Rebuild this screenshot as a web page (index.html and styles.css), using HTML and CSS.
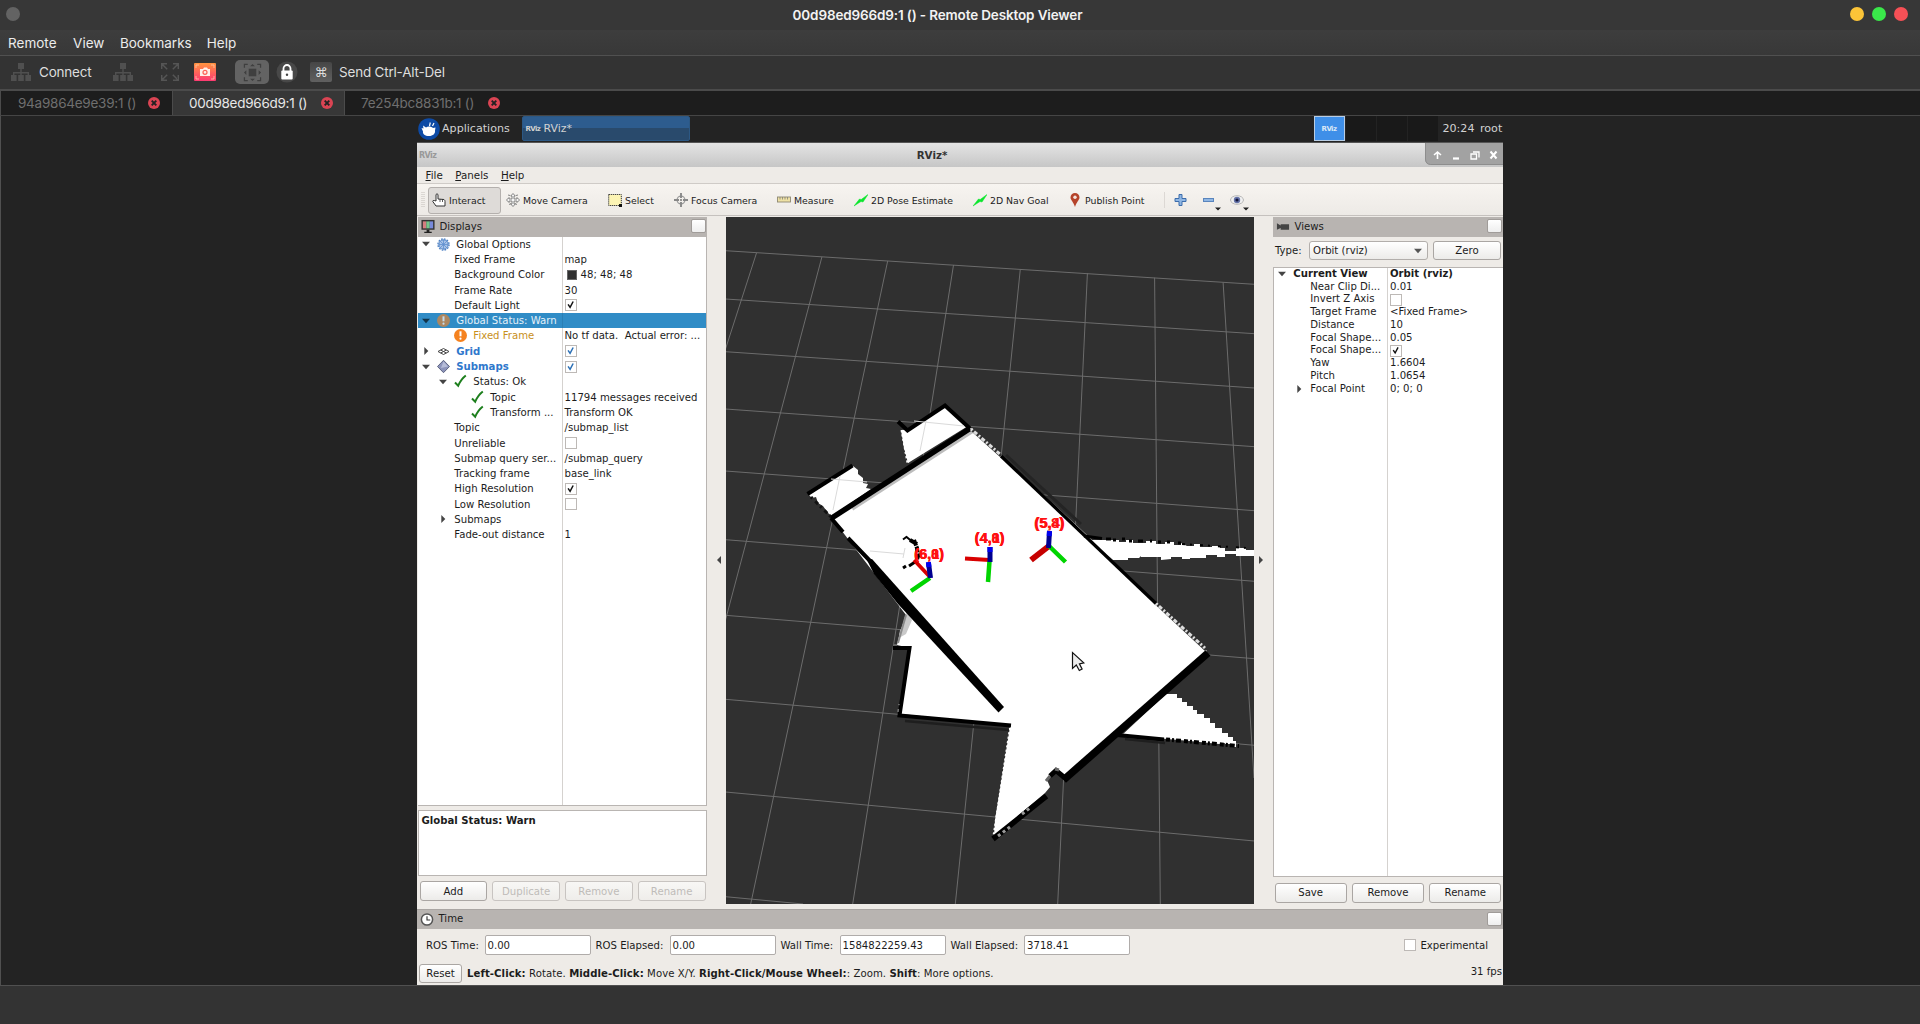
FILE: index.html
```html
<!DOCTYPE html>
<html lang="en">
<head>
<meta charset="utf-8">
<title>Remote Desktop Viewer</title>
<link rel="stylesheet" href="styles.css">
</head>
<body>
<svg class="defs" aria-hidden="true">
  <symbol id="net" viewBox="0 0 20 20"><path d="M7 1h6v6h-6zM0 13h5.6v6H0zM7.2 13h5.6v6H7.2zM14.400 13H20v6h-5.600zM9.300 7h1.400v6H9.300zM2 10h16v1.400H2zM2 10h1.400v3H2zM16.600 10H18v3h-1.400z" fill="#505050"/></symbol>
  <symbol id="tabx" viewBox="0 0 12 12"><circle cx="6" cy="6" r="6" fill="#da4453"/><path d="M3.700 3.700l4.600 4.600M8.300 3.700L3.700 8.300" stroke="#222" stroke-width="1.900"/></symbol>
  <symbol id="down" viewBox="0 0 12 12"><path d="M2 3.800h8L6 8.200z" fill="currentColor"/></symbol>
  <symbol id="right" viewBox="0 0 12 12"><path d="M4.300 2v8L8.300 6z" fill="currentColor"/></symbol>
  <symbol id="tick" viewBox="0 0 12 12"><path d="M2.500 5.300l2.400 3.500L8.600 1.800" fill="none" stroke="currentColor" stroke-width="1.800"/></symbol>
  <symbol id="ok" viewBox="0 0 15 15"><path d="M2 8.500l3.200 3.200C7 7.500 9.500 4 12.800 1.500" fill="none" stroke="#1d7f1d" stroke-width="2"/></symbol>
  <symbol id="warn" viewBox="0 0 15 15"><circle cx="7.500" cy="7.500" r="6.500" fill="#f5821f"/><path d="M7.500 3.300v5" stroke="#fff" stroke-width="2"/><circle cx="7.500" cy="10.700" r="1.100" fill="#fff"/></symbol>
  <symbol id="arrow" viewBox="0 0 14 14"><path d="M0 13L5.500 6l1.700.5L14 1.500 9 9 7 8.500z" fill="#0be62c" stroke="#0be62c" stroke-width=".5"/></symbol>
</svg>

<header class="titlebar">
  <span class="dot grey"></span>
  <span class="title">00d98ed966d9:1 () - Remote Desktop Viewer</span>
  <span class="lights"><span class="dot amber"></span><span class="dot green"></span><span class="dot red"></span></span>
</header>
<nav class="menubar"><span>Remote</span><span>View</span><span>Bookmarks</span><span>Help</span></nav>
<div class="hosttools">
  <svg class="net"><use href="#net"/></svg><span class="connect">Connect</span>
  <svg class="net two"><use href="#net"/></svg>
  <svg class="full" viewBox="0 0 18 18"><path d="M.7 6V.7H6M.7.7l5.500 5.500M12 .7h5.300V6M17.300.7l-5.500 5.500M.7 12v5.300H6M.7 17.300l5.500-5.500M12 17.300h5.300V12M17.300 17.300l-5.500-5.500" fill="none" stroke="#555" stroke-width="1.500"/></svg>
  <svg class="shot" viewBox="0 0 22 18"><defs><linearGradient id="sg" x2="0" y2="1"><stop offset="0" stop-color="#ff9440"/><stop offset="1" stop-color="#fd3a72"/></linearGradient></defs><rect width="22" height="18" rx="1" fill="url(#sg)"/><path d="M2 5V2h3M17 2h3v3M2 13v3h3M17 16h3v-3" fill="none" stroke="#ffc9a8" stroke-width=".8"/><path d="M6 6h3l1-1.500h3L14 6h2v7H6z" fill="#fff0e8"/><circle cx="11" cy="9.300" r="2" fill="none" stroke="#fd6355" stroke-width="1.200"/></svg>
  <span class="toggle"><svg viewBox="0 0 20 20"><rect x="6" y="6" width="8" height="8" fill="#3f3f3f"/><path d="M1.500 5V1.500H5M15 1.500h3.500V5M1.500 15v3.500H5M15 18.500h3.500V15" fill="none" stroke="#3f3f3f" stroke-width="1.300"/><path d="M7.500 3.500L10 1l2.500 2.500zM7.500 16.500L10 19l2.500-2.500zM3.500 7.500L1 10l2.500 2.500zM16.500 7.500L19 10l-2.500 2.500z" fill="#3f3f3f"/></svg></span>
  <svg class="lock" viewBox="0 0 22 22"><circle cx="11" cy="11" r="10.500" fill="#484848"/><path d="M7.500 10V7.500a3.500 3.500 0 0 1 7 0V10" fill="none" stroke="#fff" stroke-width="1.800"/><rect x="5.300" y="9.500" width="11.400" height="9" rx="1" fill="#fff"/><circle cx="11" cy="13.800" r="1.200" fill="#444"/></svg>
  <span class="cmd">⌘</span><span>Send Ctrl-Alt-Del</span>
</div>
<div class="tabs">
  <div class="tab"><span>94a9864e9e39:1 ()</span><svg><use href="#tabx"/></svg></div>
  <div class="tab on"><span>00d98ed966d9:1 ()</span><svg><use href="#tabx"/></svg></div>
  <div class="tab"><span>7e254bc8831b:1 ()</span><svg><use href="#tabx"/></svg></div>
</div>

<main class="stage">
<section class="desktop">
  <div class="xfce">
    <svg class="mouse" viewBox="0 0 22 22"><circle cx="11" cy="11" r="10.800" fill="#0d4aa5"/><path d="M3.500 10l2 .5L5 7.500l3 2c2-1.500 5-1 7 .5l2.500-.5-.5 3c.5 3-2 5.500-6 5.500S4.500 16 5 13.500z" fill="#fff"/><path d="M11.500 8l.8-3.500M14.500 8l1.500-3" stroke="#fff" stroke-width="1.200"/></svg>
    <span class="apps">Applications</span>
    <span class="task"><i>RViz</i>RViz*</span>
    <span class="pager"><b><i>RViz</i></b><b></b><b></b><b></b></span>
    <span class="clock">20:24 root</span>
  </div>
  <div class="wintitle"><i>RViz</i><strong>RViz*</strong>
    <svg viewBox="0 0 78 22"><path d="M0 0h78v22H5q-5-1-5-6z" fill="#a2a2a2"/><path d="M.5 0v16q0 5 5 5.500H78" fill="none" stroke="#8d8d8d"/><g fill="none" stroke="#fff" stroke-width="1.600"><path d="M12.500 16v-6M9 12l3.500-3 3.500 3"/><path d="M28 15.500h6" stroke-width="2.200"/><path d="M46 11h5.500v5H46zM48 9h6v5.500" stroke-width="1.300"/><path d="M65.500 8.500l6 7M71.500 8.500l-6 7" stroke-width="2"/></g></svg>
  </div>
  <div class="menu"><span><u>F</u>ile</span><span><u>P</u>anels</span><span><u>H</u>elp</span></div>
  <div class="tools">
    <svg class="grip" viewBox="0 0 4 16"><path d="M1 0v16M3 0v16" stroke="#c4bfba" stroke-dasharray="1 1"/></svg>
    <span class="tool sel"><svg viewBox="0 0 14 14"><path d="M4 8V1.500q1-1.500 2 0V6l6 .5q1 .5 1 2V13H4L.8 8.500q0-1.500 1.500-1z" fill="#fff" stroke="#333"/><path d="M8 6v3M10.500 6v3" stroke="#333" stroke-width=".8"/></svg>Interact</span>
    <span class="tool"><svg viewBox="0 0 14 14"><g fill="#f6f6f6" stroke="#777" stroke-width=".9"><path d="M7 .5L9.300 3H8v3h3V4.500L13.500 7 11 9.500V8H8v3h1.300L7 13.500 4.700 11H6V8H3v1.500L.5 7 3 4.500V6h3V3H4.700z"/><path d="M2 2l2 .5M12 2l-2 .5M3 11.500l2-1M11 11.500l-2-1"/></g></svg>Move Camera</span>
    <span class="tool"><svg viewBox="0 0 14 14"><rect x=".7" y="1.500" width="12.600" height="11" fill="#fcf4b4" stroke="#333" stroke-dasharray="1.200 .8"/><path d="M11 11h3v3h-3z" fill="#111"/></svg>Select</span>
    <span class="tool"><svg viewBox="0 0 14 14"><circle cx="7" cy="7" r="3.900" fill="none" stroke="#999" stroke-width="1.200"/><path d="M7 0v5M7 9v5M0 7h5M9 7h5" stroke="#888" stroke-width="1.900"/><circle cx="7" cy="7" r="1" fill="#777"/></svg>Focus Camera</span>
    <span class="tool"><svg viewBox="0 0 14 14"><rect x=".5" y="4" width="13" height="5" fill="#eee1a4" stroke="#8e8872" stroke-width=".9"/><path d="M3 4v2.500M5.500 4v2.500M8 4v2.500M10.500 4v2.500" stroke="#777" stroke-width=".7"/></svg>Measure</span>
    <span class="tool"><svg><use href="#arrow"/></svg>2D Pose Estimate</span>
    <span class="tool"><svg><use href="#arrow"/></svg>2D Nav Goal</span>
    <span class="tool"><svg viewBox="0 0 14 14"><path d="M7 0a4.500 4.500 0 0 1 4.500 4.500C11.500 7 8.500 9 7 14 5.500 9 2.500 7 2.500 4.500A4.500 4.500 0 0 1 7 0z" fill="#b5432a"/><circle cx="7" cy="4.200" r="1.700" fill="#f4e3dd"/></svg>Publish Point</span>
    <svg class="extra" viewBox="0 0 90 32"><path d="M.5 8v16" stroke="#dcd8d4"/><path d="M15 10.500h3v4h4v3h-4v4h-3v-4h-4v-3h4z" fill="#8fb6e3" stroke="#3c6cab"/><rect x="39.500" y="14.500" width="10" height="3" fill="#8fb6e3" stroke="#5a85bd"/><path d="M51 23.500h6l-3 3zM79 23.500h6l-3 3z" fill="#222"/><ellipse cx="73" cy="16" rx="6.500" ry="4.300" fill="#f0f0f0" stroke="#aaa" stroke-width=".8"/><circle cx="73" cy="16" r="3.200" fill="#6573a8"/><circle cx="73" cy="16" r="1.600" fill="#12153a"/></svg>
  </div>

  <div class="work">
    <aside class="left">
      <div class="phead"><svg viewBox="0 0 15 15"><rect x=".5" y=".5" width="14" height="10.500" fill="#333"/><path d="M2 2h3.700v7.500H2z" fill="#d47d80"/><path d="M5.700 2h3.700v7.500H5.700z" fill="#73c68b"/><path d="M9.400 2H13v7.500H9.400z" fill="#7789da"/><path d="M6 11h3v2h2.500v1.500h-8V13H6z" fill="#222"/></svg><span>Displays</span><b></b></div>
      <div class="tree">
        <div class="row"><span class="n"><svg class="a"><use href="#down"/></svg><svg class="i" viewBox="0 0 15 15"><circle cx="7.500" cy="7.500" r="4.700" fill="#a9c4e8" stroke="#4f82c4" stroke-width="1"/><circle cx="7.500" cy="7.500" r="5.600" fill="none" stroke="#4f82c4" stroke-width="1.300" stroke-dasharray="1.700 1.200"/><path d="M7.500 3v9M3 7.500h9M4.300 4.300l6.400 6.400M10.700 4.300l-6.400 6.400" stroke="#5f8fce" stroke-width=".8"/></svg>Global Options</span><span class="v"></span></div>
        <div class="row l1"><span class="n">Fixed Frame</span><span class="v">map</span></div>
        <div class="row l1"><span class="n">Background Color</span><span class="v"><em></em>48; 48; 48</span></div>
        <div class="row l1"><span class="n">Frame Rate</span><span class="v">30</span></div>
        <div class="row l1"><span class="n">Default Light</span><span class="v"><svg class="cb"><use href="#tick"/></svg></span></div>
        <div class="row hl"><span class="n"><svg class="a"><use href="#down"/></svg><svg class="i dim"><use href="#warn"/></svg>Global Status: Warn</span><span class="v"></span></div>
        <div class="row l1"><span class="n amberText"><svg class="i"><use href="#warn"/></svg>Fixed Frame</span><span class="v">No tf data.&nbsp; Actual error: ...</span></div>
        <div class="row"><span class="n blue"><svg class="a"><use href="#right"/></svg><svg class="i" viewBox="0 0 15 15"><path d="M2 7.500L7.500 4.500 13 7.500 7.500 10.500zM4.700 6l5.600 3M10.300 6L4.700 9" fill="none" stroke="#444" stroke-width="1"/></svg>Grid</span><span class="v bl"><svg class="cb"><use href="#tick"/></svg></span></div>
        <div class="row"><span class="n blue"><svg class="a"><use href="#down"/></svg><svg class="i" viewBox="0 0 15 15"><path d="M7.500 1.300l6 6.200-6 6.200-6-6.200z" fill="#8d94bb" stroke="#555b78" stroke-width=".9"/><path d="M7.500 2.500L12 7.500 5 9z" fill="#b6bcd8"/></svg>Submaps</span><span class="v bl"><svg class="cb"><use href="#tick"/></svg></span></div>
        <div class="row l1"><span class="n"><svg class="a"><use href="#down"/></svg><svg class="i"><use href="#ok"/></svg>Status: Ok</span><span class="v"></span></div>
        <div class="row l2"><span class="n"><svg class="i"><use href="#ok"/></svg>Topic</span><span class="v">11794 messages received</span></div>
        <div class="row l2"><span class="n"><svg class="i"><use href="#ok"/></svg>Transform ...</span><span class="v">Transform OK</span></div>
        <div class="row l1"><span class="n">Topic</span><span class="v">/submap_list</span></div>
        <div class="row l1"><span class="n">Unreliable</span><span class="v"><svg class="cb"></svg></span></div>
        <div class="row l1"><span class="n">Submap query ser...</span><span class="v">/submap_query</span></div>
        <div class="row l1"><span class="n">Tracking frame</span><span class="v">base_link</span></div>
        <div class="row l1"><span class="n">High Resolution</span><span class="v"><svg class="cb"><use href="#tick"/></svg></span></div>
        <div class="row l1"><span class="n">Low Resolution</span><span class="v"><svg class="cb"></svg></span></div>
        <div class="row l1"><span class="n"><svg class="a"><use href="#right"/></svg>Submaps</span><span class="v"></span></div>
        <div class="row l1"><span class="n">Fade-out distance</span><span class="v">1</span></div>
        <div class="fill"></div>
      </div>
      <div class="split"></div>
      <div class="info">Global Status: Warn</div>
      <div class="btns"><button>Add</button><button disabled>Duplicate</button><button disabled>Remove</button><button disabled>Rename</button></div>
    </aside>
    <div class="gut"><svg viewBox="0 0 6 8"><path d="M5 0v8L1 4z" fill="#444"/></svg></div>
    <svg class="view" viewBox="726 217 528 687" preserveAspectRatio="none">
      <rect x="726" y="217" width="528" height="687" fill="#303030"/>
      <g stroke="#6c6c6c" stroke-width="1" fill="none">
        <path d="M725.500 250.700L1254.500 284.300M725.500 299L1254.500 333.700M725.500 351.700L1254.500 388M725.500 409L1254.500 446.700M725.500 471L1254.500 510.700M725.500 539.700L1254.500 581.300M725.500 615.300L1254.500 658.700M725.500 699.300L1254.500 745.300M725.500 792L1254.500 841M725.500 896.700L803 904"/>
        <path d="M756.500 253L725.500 349M821.900 257L725.500 620M887.700 261L750.700 904M953.500 265L852.700 904M1020.300 269.300L955.300 904M1087.400 273.300L1057.700 904M1154.600 277.700L1160.300 904M1223.100 282.300L1254 778"/>
      </g>
      <!-- free space -->
      <g fill="#fff">
        <path d="M971 428L1001 455 1088 536 1156 604 1207 651 1064 777 1057 769 1047 780 1050 787 1045 793 994 836 995 820 1010 727 1011 725 901 714 910 648 897 645 900 632 906 615 832 518z"/>
        <path d="M945 405L968 426 908 463 904 448 901 430 907 430z"/>
        <path d="M853 466L858 470 858 474 863 478 863 483 868 484 866 488 871 489 832 516 828 513 823 506 818 503 816 497 812 498 809 495z"/>
        <path d="M1089 540H1119V542H1126V540H1133V543H1146V541H1156V544H1165V542H1174V545H1181V543L1187 546H1194V544H1200V547H1212V546H1220V548H1225V551H1236V548H1246V550H1254V556H1236V554H1225V557H1217V555H1206V558H1190V559H1182V557H1171V559L1161 560V557H1141V556L1139 558H1128V560H1113z"/>
        <path d="M1166 694H1177V698H1182V702H1187V706H1193V710H1197V714H1204V718H1210V723H1215V728H1222V733H1228V737H1233V741H1236V747H1230V744H1225V743L1219 744 1190 741 1122 735z"/>
      </g>
      <path d="M902 430L908 463M1010.500 728L994 836" stroke="#fff" stroke-width="3" stroke-dasharray="2.200 2.200"/>
      <path d="M907 612l5 8-6 14-7 4 1-8 3-3 1-8z" fill="#c9c9c9"/>
      <path d="M898 643l4-14 4-14" stroke="#8a8a8a" stroke-width="2" fill="none"/>
      <path d="M852 508.500L972 431" stroke="#bdbdbd" stroke-width="4.500"/>
      <!-- walls -->
      <g stroke="#000" fill="none" stroke-width="4">
        <path d="M898 421.500L907.500 430.500 945 405.500 970 428.500"/>
        <path d="M831 518.500L970 428.500" stroke-width="5.500"/>
        <path d="M807.500 494L852.500 465.500"/>
        <path d="M831 518L843 532M848 538L872 563" stroke-width="4"/>
        <path d="M1001 456L1156 603.500" stroke-width="3.300"/>
        <path d="M1208 653L1063.500 780" stroke-width="7.500"/>
        <path d="M1065 778L1056 770.500 1050 776" stroke-width="5"/>
        <path d="M893 648H909.500L899.500 715.500 1011 725.500" stroke-width="4"/>
        <path d="M1084 536L1102 538.500M1106 539h5M1113 540h3M1122 539h3M1129 541h3M1138 541h5M1150 541h2M1158 542h3M1167 542h3M1178 543h3" stroke-width="3"/>
        <path d="M1182 544L1246 548" stroke-width="2" stroke-dasharray="3 5 2 8"/>
        <path d="M1117 735L1164 739.500" stroke-width="4"/>
        <path d="M1166 739.500L1239 746" stroke-width="4" stroke-dasharray="4 2 2 2 5 3"/>
        <path d="M1046.500 796L993 839" stroke-width="5.500"/>
        <path d="M903 539.500l4-3M906 536.500l6 5" stroke-width="2"/>
        <path d="M910 540l7 4M914 540l3 8 1 8-2 7" stroke-width="4" stroke-dasharray="6 1"/>
        <path d="M915 562l-6 4M906 566l-3 2" stroke-width="3"/>
      </g>
      <path d="M867 560L872 559 1004 707 998.500 712.500 898 604 874 574z"/>
      <g fill="none" stroke-width="3">
        <path d="M972 430L1001 456M1156 603.500L1206 650" stroke="#333" stroke-width="3"/>
        <path d="M971 429L1001 455M1156 603.500L1205 648" stroke="#ddd" stroke-dasharray="2 2 4 2" />
        <path d="M811 497l20 20" stroke="#111" stroke-dasharray="2 4 4 3"/>
        <path d="M1006 455l75 69" stroke="#242424" stroke-width="3"/>
        <path d="M905 721l104 9M1125 739l40 4" stroke="#1e1e1e" stroke-width="2.500"/>
        <path d="M998 836l12-9M1022 814l8-6" stroke="#999" stroke-dasharray="3 3"/>
        <path d="M1046 781l4-5M1055 769l4 1" stroke="#666"/>
        <path d="M898 712l1-8M894 645l5 0" stroke="#777" stroke-width="1.500" stroke-dasharray="3 4"/>
      </g>
      <path d="M914 421l50 5M926 421l-6 30M831 479l36 3M840 476l-7 34M870 551l34 3M905 548l-2 10" stroke="#dadada" fill="none"/>
      <!-- submap poses -->
      <g class="pose">
        <g fill="none" stroke-width="4.500">
          <path d="M930 577L914 560M989.500 560L965 558.500" stroke="#d90000" stroke-width="3.800"/><path d="M1049 546L1031 560" stroke="#c60000" stroke-width="6"/>
          <path d="M930 578L911 591M989.500 561L988 582M1049 546L1065.500 562" stroke="#00d400"/>
          <path d="M930.500 578L928.500 563M990 562V547M1048.500 548L1049.500 531" stroke="#000090" stroke-width="5"/>
          <path d="M928.900 567L928.400 562M990 552V547M1049.200 536L1049.500 531" stroke="#0000f0" stroke-width="5"/>
        </g>
        <text x="929" y="559">(6,8)</text><text x="929.500" y="559">(6,1)</text><text x="929" y="559">(6,0)</text>
        <text x="989.500" y="543">(4,8)</text><text x="989.500" y="543">(4,0)</text><text x="990" y="543">(4,1)</text>
        <text x="1049" y="528">(5,8)</text><text x="1050" y="528">(5,4)</text>
      </g>
      <path d="M1072.500 652.500v16l3.800-3.500 3 5.500 2.800-1.500-2.700-5.200 4.400-1z" fill="#ececec" stroke="#111" stroke-width="1.200"/>
    </svg>
    <div class="gut r"><svg viewBox="0 0 6 8"><path d="M1 0v8L5 4z" fill="#444"/></svg></div>
    <aside class="rightp">
      <div class="phead"><svg viewBox="0 0 15 15"><path d="M1 4l4 2.500V5h9v6H5V9L1 11z" fill="#444"/></svg><span>Views</span><b></b></div>
      <div class="type"><span>Type:</span><span class="combo">Orbit (rviz)<svg><use href="#down"/></svg></span><button>Zero</button></div>
      <div class="tree small">
        <div class="row bold"><span class="n"><svg class="a"><use href="#down"/></svg>Current View</span><span class="v">Orbit (rviz)</span></div>
        <div class="row l1"><span class="n">Near Clip Di...</span><span class="v">0.01</span></div>
        <div class="row l1"><span class="n">Invert Z Axis</span><span class="v"><svg class="cb"></svg></span></div>
        <div class="row l1"><span class="n">Target Frame</span><span class="v">&lt;Fixed Frame&gt;</span></div>
        <div class="row l1"><span class="n">Distance</span><span class="v">10</span></div>
        <div class="row l1"><span class="n">Focal Shape...</span><span class="v">0.05</span></div>
        <div class="row l1"><span class="n">Focal Shape...</span><span class="v"><svg class="cb"><use href="#tick"/></svg></span></div>
        <div class="row l1"><span class="n">Yaw</span><span class="v">1.6604</span></div>
        <div class="row l1"><span class="n">Pitch</span><span class="v">1.0654</span></div>
        <div class="row l1"><span class="n"><svg class="a"><use href="#right"/></svg>Focal Point</span><span class="v">0; 0; 0</span></div>
        <div class="fill"></div>
      </div>
      <div class="btns"><button>Save</button><button>Remove</button><button>Rename</button></div>
    </aside>
  </div>

  <div class="phead time"><svg viewBox="0 0 15 15"><circle cx="7.500" cy="7.500" r="6" fill="#fff" stroke="#555" stroke-width="1.600"/><path d="M7.500 4v4H11" fill="none" stroke="#333" stroke-width="1.200"/></svg><span>Time</span><b></b></div>
  <div class="clockrow">
    <span>ROS Time:</span><span class="field">0.00</span>
    <span>ROS Elapsed:</span><span class="field">0.00</span>
    <span>Wall Time:</span><span class="field">1584822259.43</span>
    <span>Wall Elapsed:</span><span class="field">3718.41</span>
    <span class="exp"><svg class="cb"></svg>Experimental</span>
  </div>
  <div class="status"><button>Reset</button><span class="hint"><b>Left-Click:</b> Rotate. <b>Middle-Click:</b> Move X/Y. <b>Right-Click/Mouse Wheel:</b>: Zoom. <b>Shift</b>: More options.</span><span class="fps">31 fps</span></div>
</section>
</main>
<footer class="foot"></footer>
</body>
</html>
```
FILE: styles.css
```css
*{box-sizing:border-box}
body{margin:0;width:1920px;height:1024px;overflow:hidden;background:#333;display:flex;flex-direction:column;font:13.500px Inter,sans-serif;color:#dedede;white-space:nowrap}
svg{display:block;flex:none}
button{font:inherit;padding:0;margin:0}
.defs{position:absolute;width:0;height:0}
.titlebar{height:30px;flex:none;background:#373737;display:flex;align-items:center;justify-content:space-between;padding:0 12px 2px 6px}
.title{font-weight:600;font-size:13.500px;color:#f2f2f2;letter-spacing:-.14px;padding:2px 0 0 5px}
.dot{width:14px;height:14px;border-radius:50%}
.grey{background:#636363}.amber{background:#fcc438}.green{background:#3ae84a}.red{background:#f65056}
.lights{display:flex;gap:8px}
.lights .dot{width:14px}
.menubar{height:26px;flex:none;background:linear-gradient(#3d3d3d,#383838);border-bottom:1px solid #505050;display:flex;gap:16.500px;align-items:center;padding:0 8px 0;color:#ececec;letter-spacing:.02px}
.menubar span:nth-child(2){margin-right:-1px}
.menubar span:nth-child(3){margin-right:-1.500px}
.hosttools{height:35px;flex:none;border-bottom:2px solid #4b4b4b;display:flex;align-items:center;padding:0 0 1px 11px;letter-spacing:-.2px}
.net{width:20px;height:20px;margin-right:8px}
.connect{width:74px}
.two{margin-right:28px}
.full{width:18px;height:18px;margin-right:15px}
.shot{width:22px;height:18px;margin-right:19px}
.toggle{width:34px;height:24px;border-radius:5px;background:#636363;display:grid;place-items:center;margin-right:7px}
.toggle svg{width:19px;height:19px}
.lock{width:22px;height:22px;margin-right:12px}
.cmd{width:22px;height:20px;border-radius:2px;background:linear-gradient(#464646,#606060);display:grid;place-items:center;font:13px "DejaVu Sans",sans-serif;margin-right:7px}
.tabs{height:25px;flex:none;display:flex;background:#1d1d1d;border-left:1px solid #4b4b4b;border-bottom:1px solid #454545;letter-spacing:-.28px}
.tab{width:171px;display:flex;align-items:center;justify-content:space-between;padding:0 12px 0 17px;color:#6f6f6f}
.tab svg{width:12px;height:12px}
.tab.on{width:173px;padding:0 11.500px 0 16px;background:#373737;color:#e8e8e8;border:solid #4b4b4b;border-width:0 1px}
.tab:last-child{width:167px;padding-left:16px}
.tab:nth-child(1){letter-spacing:-.25px}
.stage{height:869px;flex:none;background:#232323;border-left:1px solid #505050;display:flex;padding-left:416px}
.foot{flex:1;background:#333;border-top:1px solid #505050}

.desktop{width:1086px;display:flex;flex-direction:column;background:#eeebe7;color:#1c1c1c;font:10.150px "DejaVu Sans",sans-serif}
.desktop i{font-style:normal;font-size:7px;letter-spacing:-.6px;font-weight:bold}
.xfce{height:26px;flex:none;background:#232323;display:flex;align-items:center;color:#d2d2d2;font-size:11.100px;padding-bottom:1px}
.mouse{width:22px;height:22px;margin:0 2px 0 1px}
.apps{width:79.500px}
.task{width:168px;height:25px;border:1px solid #2c5884;border-radius:2px;background:linear-gradient(#2d5c8e 50%,#294a6c 50%);display:flex;align-items:center;padding-left:3px;font-size:10.900px}
.task i{width:18px}
.pager{display:flex;gap:1px;margin-left:624px;height:25px}
.pager b{width:30px;background:#191919}
.pager b:first-child{width:31px;background:#3f8fe8;border:1px solid #b8cde4;color:#dce8f6;display:grid;place-items:center}
.clock{margin-left:5px;word-spacing:2px}
.wintitle{height:25px;flex:none;border-top:1px solid #555;background:linear-gradient(#e4e4e4,#c6c6c6);display:flex;align-items:center;justify-content:space-between;color:#333}
.wintitle i{width:78px;color:#999;padding-left:2px;font-size:8px}
.wintitle strong{font-size:10.300px;margin-right:-50px;flex:1;text-align:center;padding-right:106px}
.wintitle svg{width:78px;height:22px;align-self:flex-start}
.menu{height:17px;flex:none;display:flex;align-items:center;gap:12.500px;padding-left:8.500px;border-bottom:1px solid #cfcbc7;font-size:10.300px}
.menu u{text-underline-offset:1px}
.tools{height:32px;flex:none;display:grid;grid-template-columns:11px 74px 102px 66px 103px 77px 119px 95px 100px 90px;align-items:center;background:linear-gradient(#f7f4f0,#edeae6);border-bottom:1px solid #c5c1be;font-size:9.350px}
.grip{width:4px;height:16px;margin-left:4px}
.tool{display:flex;align-items:center;gap:3px;height:27px;padding-left:4px}
.tool svg{width:14px;height:14px}
.sel{background:#dedbd8;border:1px solid #b4b0ad;border-radius:3px;margin-right:1px;padding-left:3px}
.extra{width:90px;height:32px}

.work{display:flex;height:693px;flex:none;padding-top:1px}
.left{width:290px;display:flex;flex-direction:column;padding-left:1px}
.phead{height:19.500px;flex:none;background:#b8b4b1;display:flex;align-items:center;padding:0 1px 0 3px}
.phead svg{width:14px;height:15px}
.phead span{margin-left:4.500px;flex:1;padding-bottom:1px}
.phead b{width:15px;height:14px;border:1px solid #a09c99;border-radius:2px;background:linear-gradient(#fff,#eee);margin-bottom:1px}
.tree{flex:1;background:#fff;border:solid #b9b5b2;border-width:0 1px 1px 0;display:flex;flex-direction:column;min-height:0}
.row{display:flex;height:15.300px;flex:none;line-height:15px}
.n{width:144.500px;flex:none;display:flex;align-items:center;padding-left:2px;border-right:1px solid #d5d2cf}
.l1 .n{padding-left:19px}
.l1 .n:not(:has(svg)){padding-left:36.300px}
.l1 .n:not(:has(.a)):has(.i){padding-left:31px}
.l2 .n{padding-left:48px}
.a{width:12px;height:12px;color:#444;margin-right:5.300px}
.a:has(+.i){margin-right:0}
.i{width:15px;height:15px;margin:0 5.300px 0 4px}
.v{padding-left:2px;display:flex;align-items:center}
.v em{width:10px;height:10px;background:#303030;border:1px solid #666;margin:0 4px 0 2px}
.cb{width:12px;height:12px;border:1px solid #bdb9b6;background:#fff;color:#111}
.bl .cb{color:#2a6fb5}
.hl{background:#308cc6;color:#fff}
.hl .n{border-color:#2a7fb5;color:#e4f0f8}
.hl .a{color:#12344a}
.dim{opacity:.7;filter:saturate(.8)}
.amberText{color:#c8901c}
.blue{color:#2f78cc;font-weight:bold}
.fill{flex:1;width:144.500px;border-right:1px solid #d5d2cf}
.split{height:4px;flex:none}
.info{height:66px;flex:none;background:#fff;border:1px solid #b9b5b2;font-weight:bold;padding:4px 2.500px}
.btns{display:flex;gap:5px;padding:5px 1.500px 0;height:33px;flex:none}
button{height:20px;flex:1;border:1px solid #aaa6a3;border-radius:3px;background:linear-gradient(#fff,#ecebe9);color:#1c1c1c;text-align:center}
button:disabled{color:#bfbcb9;border-color:#c8c4c1;background:linear-gradient(#f8f7f5,#efedea)}
.gut{width:19px;height:687px;display:flex;align-items:center;justify-content:center;padding:0 0 2px 4px}
.gut.r{padding:0 5px 2px 0}
.gut svg{width:6px;height:8px}
.view{width:528px;height:687px}
.pose text{font:bold 14.500px "Liberation Sans",sans-serif;fill:#f11;text-anchor:middle}
.rightp{width:230px;display:flex;flex-direction:column}
.type{height:30px;flex:none;display:flex;align-items:center;padding:0 2px 2px}
.type>span:first-child{width:34px}
.combo{width:119px;height:19px;border:1px solid #b2aeab;border-radius:3px;background:linear-gradient(#fff,#ecebe9);display:flex;align-items:center;justify-content:space-between;padding:0 3px;margin-right:5px}
.combo svg{width:12px;height:12px;color:#555}
.type button{height:19px}
.small{border-width:1px 0 1px 1px;padding-top:.5px}
.small .row{height:12.740px;line-height:12.700px}
.small .n,.small .fill{width:114px}
.bold{font-weight:bold}
.small .cb{height:11.500px}
.rightp .btns{height:32px;padding-top:6px}
.rightp .btns button{height:19.500px}
.time{border-top:1px solid #a9a5a2}
.clockrow{height:33px;flex:none;display:flex;align-items:center;padding:0 15px 0 9px}
.clockrow>span:nth-child(odd){width:58.500px}
.clockrow>span:nth-child(3){width:74px}
.clockrow>span:nth-child(5){width:59px}
.clockrow>span:nth-child(7){width:73.500px}
.clockrow .field{width:106px;height:20px;border:1px solid #b0acaa;border-radius:2px;background:#fff;padding:2.500px 2px;margin-right:5px;line-height:13px}
.clockrow .exp{display:flex;align-items:center;gap:4px;margin-left:auto;width:auto!important}
.status{height:24px;flex:none;display:flex;align-items:center;padding:0 1px 1px 2px}
.status button{flex:none;width:43px;height:19px;margin:1px 5px 0 0}
.hint{flex:1;padding-top:1px;white-space:pre;letter-spacing:.07px}
.fps{padding-bottom:4px}
```
